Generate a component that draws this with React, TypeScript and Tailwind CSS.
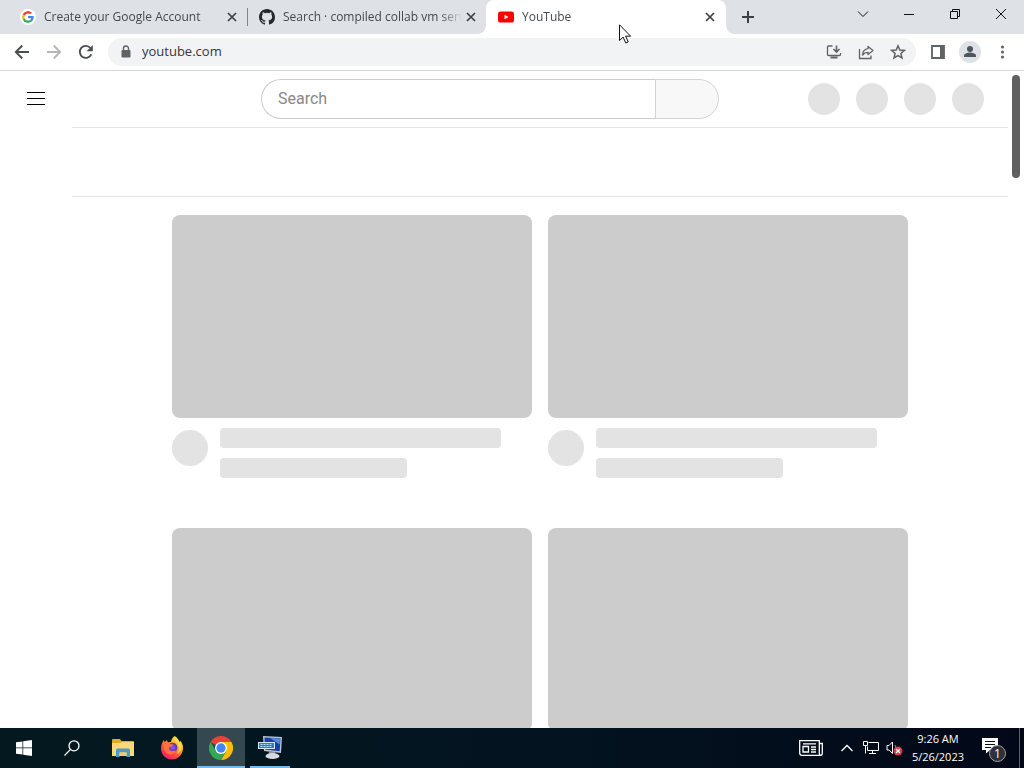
import type { ReactNode } from "react";

const uiFont = "font-['Open_Sans','Noto_Sans',sans-serif]";

function GoogleIcon() {
  return (
    <svg viewBox="0 0 48 48" className="size-4 rounded-full bg-white p-0.5" aria-hidden="true">
      <path fill="#EA4335" d="M24 9.5c3.54 0 6.71 1.22 9.21 3.6l6.85-6.85C35.9 2.38 30.47 0 24 0 14.62 0 6.51 5.38 2.56 13.22l7.98 6.19C12.43 13.72 17.74 9.5 24 9.5z" />
      <path fill="#4285F4" d="M46.98 24.55c0-1.57-.15-3.09-.38-4.55H24v9.02h12.94c-.58 2.96-2.26 5.48-4.78 7.18l7.73 6c4.51-4.18 7.09-10.36 7.09-17.65z" />
      <path fill="#FBBC05" d="M10.53 28.59c-.48-1.45-.76-2.99-.76-4.59s.27-3.14.76-4.59l-7.98-6.19C.92 16.46 0 20.12 0 24c0 3.88.92 7.54 2.56 10.78l7.97-6.19z" />
      <path fill="#34A853" d="M24 48c6.48 0 11.93-2.13 15.89-5.81l-7.73-6c-2.15 1.45-4.92 2.3-8.16 2.3-6.26 0-11.57-4.22-13.47-9.91l-7.98 6.19C6.51 42.62 14.62 48 24 48z" />
    </svg>
  );
}

function GithubIcon() {
  return (
    <svg viewBox="0 0 16 16" className="size-4" fill="#24292f" aria-hidden="true">
      <path d="M8 0C3.58 0 0 3.58 0 8c0 3.54 2.29 6.53 5.47 7.59.4.07.55-.17.55-.38 0-.19-.01-.82-.01-1.49-2.01.37-2.53-.49-2.69-.94-.09-.23-.48-.94-.82-1.13-.28-.15-.68-.52-.01-.53.63-.01 1.08.58 1.23.82.72 1.21 1.87.87 2.33.66.07-.52.28-.87.51-1.07-1.78-.2-3.64-.89-3.64-3.95 0-.87.31-1.59.82-2.15-.08-.2-.36-1.02.08-2.12 0 0 .67-.21 2.2.82a7.6 7.6 0 0 1 4 0c1.53-1.04 2.2-.82 2.2-.82.44 1.1.16 1.92.08 2.12.51.56.82 1.27.82 2.15 0 3.07-1.87 3.75-3.65 3.95.29.25.54.73.54 1.48 0 1.07-.01 1.93-.01 2.2 0 .21.15.46.55.38A8 8 0 0 0 16 8c0-4.42-3.58-8-8-8z" />
    </svg>
  );
}

function YoutubeIcon() {
  return (
    <svg viewBox="0 0 16 16" className="size-4" aria-hidden="true">
      <rect y="2.5" width="16" height="11" rx="2.6" fill="#f00" />
      <path d="M6.5 5.8v4.4L10.3 8z" fill="#fff" />
    </svg>
  );
}

function CloseIcon() {
  return (
    <svg viewBox="0 0 10 10" className="size-[10px]" stroke="#3c4043" strokeWidth="1.7" aria-hidden="true">
      <path d="M1 1l8 8M9 1L1 9" />
    </svg>
  );
}

type TabProps = { title: string; icon: ReactNode; active?: boolean; divider?: boolean };

function Tab({ title, icon, active, divider }: TabProps) {
  return (
    <div
      className={
        active
          ? "relative flex w-60 min-w-0 items-center rounded-t-lg bg-white pr-[11px] pl-3"
          : "relative flex w-[239px] min-w-0 items-center pr-[10px] pl-3"
      }
    >
      {active && (
        <>
          <span className="absolute bottom-0 -left-2 size-2 bg-[radial-gradient(circle_at_0_0,transparent_7.5px,white_8px)]" />
          <span className="absolute -right-2 bottom-0 size-2 bg-[radial-gradient(circle_at_100%_0,transparent_7.5px,white_8px)]" />
        </>
      )}
      <button role="tab" aria-selected={!!active} className="flex h-full min-w-0 flex-1 items-center gap-2 text-left">
        <span className="shrink-0">{icon}</span>
        <span className="min-w-0 flex-1 overflow-hidden text-xs whitespace-nowrap text-[#45494d] [mask-image:linear-gradient(to_right,black_88%,transparent)]">
          {title}
        </span>
      </button>
      <button aria-label={`Close ${title}`} className="ml-1 shrink-0">
        <CloseIcon />
      </button>
      {divider && <span className="absolute top-2 -right-px h-[18px] w-px bg-[#80868b]" />}
    </div>
  );
}

function WindowButton({ label, children }: { label: string; children: ReactNode }) {
  return (
    <button aria-label={label} className="flex h-7 w-[46px] items-center justify-center">
      <svg viewBox="0 0 12 12" className="size-3" fill="none" stroke="#111" strokeWidth="1" aria-hidden="true">
        {children}
      </svg>
    </button>
  );
}

function TabStrip() {
  return (
    <div className="flex h-[34px] shrink-0 bg-[#dee1e6]">
      <div role="tablist" className="flex min-w-0 pl-2">
        <Tab title="Create your Google Account" icon={<GoogleIcon />} divider />
        <Tab title="Search · compiled collab vm serv" icon={<GithubIcon />} />
        <Tab title="YouTube" icon={<YoutubeIcon />} active />
      </div>
      <button aria-label="New tab" className="flex w-11 items-center justify-center">
        <svg viewBox="0 0 12 12" className="size-3" stroke="#3c4043" strokeWidth="2" aria-hidden="true">
          <path d="M6 0v12M0 6h12" />
        </svg>
      </button>
      <div className="ml-auto flex">
        <WindowButton label="Search tabs">
          <path d="M1 3.5l5 5 5-5" />
        </WindowButton>
        <WindowButton label="Minimize">
          <path d="M1 6.5h10" />
        </WindowButton>
        <WindowButton label="Restore">
          <path d="M1.5 3.5h7v7h-7zM3.5 3.500v-2h7v7h-2" />
        </WindowButton>
        <WindowButton label="Close">
          <path d="M1 1l10 10M11 1L1 11" />
        </WindowButton>
      </div>
    </div>
  );
}

function ToolButton({ label, children }: { label: string; children: ReactNode }) {
  return (
    <button aria-label={label} className="flex h-7 w-8 shrink-0 items-center justify-center">
      <svg viewBox="0 0 16 16" className="size-4" fill="none" stroke="#5f6368" strokeWidth="1.3" aria-hidden="true">
        {children}
      </svg>
    </button>
  );
}

function Toolbar() {
  return (
    <div className="flex h-[37px] shrink-0 items-center border-b border-[#d4d6d9] bg-white px-[6px]">
      <ToolButton label="Back">
        <path d="M15 8H2M8.300 1.500L1.800 8l6.500 6.500" stroke="#4a4d51" strokeWidth="1.900" />
      </ToolButton>
      <ToolButton label="Forward">
        <path d="M1 8h13M7.700 1.500L14.200 8l-6.500 6.500" stroke="#b4b6b9" strokeWidth="1.900" />
      </ToolButton>
      <ToolButton label="Reload">
        <path d="M13.300 10.300A6 6 0 1 1 12.400 4" stroke="#4a4d51" strokeWidth="1.900" />
        <path d="M14.800 1v6.200H8.600z" fill="#4a4d51" stroke="none" />
      </ToolButton>
      <div className="ml-[6px] flex h-7 min-w-0 flex-1 items-center rounded-full bg-[#f1f3f4] pr-[2px] pl-[10px]">
        <svg viewBox="0 0 16 16" className="size-4" aria-hidden="true">
          <rect x="3.500" y="6" width="9" height="7.500" rx="1" fill="#5f6368" />
          <path d="M5.500 6.500V4.500a2.500 2.500 0 0 1 5 0v2" fill="none" stroke="#5f6368" strokeWidth="1.400" />
        </svg>
        <input
          aria-label="Address"
          defaultValue="youtube.com"
          className="ml-2 min-w-0 flex-1 bg-transparent text-[13px] text-[#34373b] outline-none"
        />
        <ToolButton label="Install YouTube">
          <path d="M6.500 2H2.500Q1.500 2 1.500 3v7.500q0 1 1 1h11q1 0 1-1V9" />
          <path d="M4.500 13.500h7" strokeWidth="2" />
          <path d="M10.500 1.500v6M7.500 5l3 3 3-3" strokeWidth="1.600" />
        </ToolButton>
        <ToolButton label="Share this page">
          <path d="M1.500 5v9.500h11.500v-3" />
          <path d="M10 2.500l5 4-5 4V8.300C7.500 8.300 6 9 4.500 11c.3-3.500 2.300-6 5.500-6.300z" strokeLinejoin="round" />
        </ToolButton>
        <ToolButton label="Bookmark this tab">
          <path d="M8 1.800l1.800 4.200 4.600.4-3.500 3 1.100 4.500L8 11.500l-4 2.400 1.100-4.500-3.500-3L6.200 6z" strokeWidth="1.500" />
        </ToolButton>
      </div>
      <div className="ml-[6px] flex">
        <ToolButton label="Side panel">
          <path d="M2 2h12v12H2z" strokeWidth="1.800" />
          <path d="M10 2h4v12h-4z" fill="#5f6368" stroke="none" />
        </ToolButton>
        <button aria-label="Profile" className="flex h-7 w-8 items-center justify-center">
          <svg viewBox="0 0 22 22" className="size-[22px]" aria-hidden="true">
            <circle cx="11" cy="11" r="11" fill="#dee1e6" />
            <circle cx="11" cy="8" r="3" fill="#4f565f" />
            <path d="M5 16v-1.500c0-2 4-3 6-3s6 1 6 3V16z" fill="#4f565f" />
          </svg>
        </button>
        <ToolButton label="Chrome menu">
          <g fill="#5f6368" stroke="none">
            <circle cx="8.500" cy="3" r="1.600" />
            <circle cx="8.500" cy="8" r="1.600" />
            <circle cx="8.500" cy="13" r="1.600" />
          </g>
        </ToolButton>
      </div>
    </div>
  );
}

function Masthead() {
  return (
    <header className="flex h-14 items-center">
      <div className="w-[261px] shrink-0 pl-6">
        <button aria-label="Guide" className="flex">
          <svg viewBox="0 0 24 24" className="size-6" stroke="#030303" strokeWidth="1" aria-hidden="true">
            <path d="M3 5.500h18M3 11.500h18M3 17.500h18" />
          </svg>
        </button>
      </div>
      <form className="flex h-10 min-w-0 flex-1" onSubmit={(e) => e.preventDefault()}>
        <input
          type="text"
          aria-label="Search"
          placeholder="Search"
          className="min-w-0 flex-1 rounded-l-full border border-r-0 border-[#ccc] pl-4 font-[Roboto,sans-serif] text-base text-[#111] outline-none placeholder:text-[#888]"
        />
        <button aria-label="Submit search" className="w-16 rounded-r-full border border-[#d3d3d3] bg-[#f8f8f8]" />
      </form>
      <div className="flex shrink-0 gap-4 pr-6 pl-[89px]">
        {[0, 1, 2, 3].map((i) => (
          <span key={i} className="size-8 rounded-full bg-[#e3e3e3]" />
        ))}
      </div>
    </header>
  );
}

function VideoSkeleton() {
  return (
    <div>
      <div className="h-[203px] rounded-lg bg-[#ccc]" />
      <div className="flex gap-3 pt-[10px]">
        <div className="mt-[2px] size-9 shrink-0 rounded-full bg-[#e3e3e3]" />
        <div className="flex-1">
          <div className="h-5 w-[90%] rounded-sm bg-[#e3e3e3]" />
          <div className="mt-[10px] h-5 w-[60%] rounded-sm bg-[#e3e3e3]" />
        </div>
      </div>
    </div>
  );
}

function Page() {
  return (
    <div className="flex min-h-0 flex-1 bg-white">
      <div className="min-w-0 flex-1 overflow-hidden">
        <Masthead />
        <main className="ml-[72px] border-t border-[#e5e5e5]">
          <div className="h-[69px] border-b border-[#e5e5e5]" />
          <div className="mx-auto grid max-w-[736px] grid-cols-2 gap-x-4 gap-y-[50px] pt-[18px]">
            {[0, 1, 2, 3].map((i) => (
              <VideoSkeleton key={i} />
            ))}
          </div>
        </main>
      </div>
      <div className="w-4 shrink-0 px-1 pt-1">
        <div className="h-[103px] rounded-full bg-[#606060]" />
      </div>
    </div>
  );
}

function TaskButton({ label, className = "", children }: { label: string; className?: string; children: ReactNode }) {
  return (
    <button aria-label={label} className={`flex w-12 shrink-0 items-center justify-center ${className}`}>
      {children}
    </button>
  );
}

function Taskbar() {
  return (
    <footer className="flex h-10 shrink-0 bg-gradient-to-r from-[#03191f] via-[#031420] to-[#020817] text-white">
      <TaskButton label="Start">
        <svg viewBox="0 0 16 16" className="size-4" fill="#fff" aria-hidden="true">
          <path d="M0 2.300l6.500-.9v6.200H0zM7.200 1.300L16 0v7.600H7.200zM0 8.300h6.500v6.300L0 13.700zM7.200 8.300H16V16l-8.800-1.300z" />
        </svg>
      </TaskButton>
      <TaskButton label="Search">
        <svg viewBox="0 0 16 16" className="size-4" fill="none" stroke="#fff" strokeWidth="1.300" aria-hidden="true">
          <circle cx="10" cy="5.800" r="5" />
          <path d="M6.500 9.400L.5 15.500" />
        </svg>
      </TaskButton>
      <div className="flex gap-[1px] pl-[3px]">
        <TaskButton label="File Explorer">
          <svg viewBox="0 0 22 18" className="h-[18px] w-[22px]" aria-hidden="true">
            <path d="M0 1q0-1 1-1h7l1.500 2H21q1 0 1 1v14H0z" fill="#e2a928" />
            <path d="M0 4h8.500L10 3h12v14H0z" fill="#fcd975" />
            <path d="M4 18v-7q0-1.500 1.500-1.500h11Q18 9.500 18 11v7h-3.500v-4.500h-7V18z" fill="#4c9bc9" />
            <path d="M7.500 13.500h7V17h-7z" fill="#f2cc66" />
          </svg>
        </TaskButton>
        <TaskButton label="Firefox">
          <svg viewBox="0 0 24 24" className="size-6" aria-hidden="true">
            <defs>
              <linearGradient id="flame" x1="0.850" y1="0" x2="0.200" y2="1">
                <stop offset="0" stopColor="#fff44f" />
                <stop offset=".35" stopColor="#ffb02e" />
                <stop offset=".65" stopColor="#ff4f40" />
                <stop offset="1" stopColor="#e5196d" />
              </linearGradient>
              <radialGradient id="globe">
                <stop offset="0" stopColor="#9059ff" />
                <stop offset="1" stopColor="#5b2bb5" />
              </radialGradient>
            </defs>
            <path d="M14.500 0c3 1.700 4.500 4 5 6l1-1.200c2 3 2.900 5.400 2.500 8.200C22.300 19 18 23.500 12 23.500S1 19 1 12.500C1 9 2.200 6 4 4l.7 2.200L7 4l.7 2.500c1-.5 2.300-.7 3.300-.5C11.300 3.500 12.500 1.500 14.500 0z" fill="url(#flame)" />
            <circle cx="12.500" cy="11.500" r="4.800" fill="url(#globe)" />
            <path d="M3 8c2.500-1.800 5-1.500 6.500 0l3.500.5c.5 1.500-1.500 2-3.500 2.500-.8 1.500-.3 2.700.8 3.500 2.200 1 4 .5 5.500-.2-.8 3-3.500 4.500-6.300 4C5.500 17.500 3.500 13.500 3 8z" fill="#ff7139" />
            <path d="M14.500 3c1.500 3.500 5 5.500 4.500 10-.2 2-1.200 3.500-2.500 4.500 5-1 6.500-7.500 3-11.500C18 4.500 16 2.500 14.500 3z" fill="#ffe04b" />
          </svg>
        </TaskButton>
        <TaskButton label="Google Chrome" className="border-b-2 border-[#76b9ed] bg-[#344850] pt-[2px]">
          <svg viewBox="0 0 48 48" className="size-6" aria-hidden="true">
            <path d="M24 24L3.200 12A24 24 0 0 1 44.800 12z" fill="#ea4335" />
            <path d="M24 12h20.800A24 24 0 0 1 24 48l10.400-18z" fill="#fbbc05" />
            <path d="M13.600 30L3.200 12A24 24 0 0 0 24 48l10.400-18z" fill="#34a853" />
            <circle cx="24" cy="24" r="12" fill="#fff" />
            <circle cx="24" cy="24" r="9.300" fill="#4285f4" />
          </svg>
        </TaskButton>
        <TaskButton label="Remote desktop" className="relative">
          <svg viewBox="0 0 24 24" className="size-6" aria-hidden="true">
            <path d="M5 0l19 1-1 16-17-2z" fill="#b9c6d9" />
            <path d="M6.500 1.500l16 .8-.8 13-14.700-1.800z" fill="#173fa5" />
            <path d="M12 2l10 .5-.4 6z" fill="#5689dd" />
            <path d="M0 6h17v7H0z" fill="#d7e8f5" />
            <path d="M1 7h15v5H1z" fill="#2980c7" />
            <path d="M2.500 8.500h12M2.500 10.500h12" stroke="#b4dcf5" strokeDasharray="2 1" />
            <path d="M11 15l6 .7.500 4-7-.5z" fill="#8d97a6" />
            <ellipse cx="14.500" cy="20" rx="7" ry="3" fill="#d8d9da" />
          </svg>
          <span className="absolute inset-x-1 bottom-0 h-[2px] bg-[#76b9ed]" />
        </TaskButton>
      </div>
      <div className="ml-auto flex items-center">
        <button aria-label="News and interests" className="mr-[18px]">
          <svg viewBox="0 0 24 16" className="h-4 w-6" fill="none" stroke="#fff" strokeWidth="1.300" aria-hidden="true">
            <path d="M3 15.300q-2.300 0-2.300-2.300V.7h19.600V13q0 2.300 1.500 2.300 1.500 0 1.500-2.300V3.500h-3M3 15.300h18.800" />
            <path d="M4 6.500h5.500v5.500H4zM4 3.800h13M12 7h5M12 9.500h5M12 12h5" />
          </svg>
        </button>
        <button aria-label="Show hidden icons" className="mr-[10px]">
          <svg viewBox="0 0 12 8" className="h-2 w-3" fill="none" stroke="#fff" strokeWidth="1.300" aria-hidden="true">
            <path d="M.5 7L6 1.500 11.500 7" />
          </svg>
        </button>
        <button aria-label="Network" className="mr-[7px]">
          <svg viewBox="0 0 16 14" className="h-[14px] w-4" fill="none" stroke="#fff" strokeWidth="1" aria-hidden="true">
            <path d="M5.500 1.500h10v8h-11v-4M.5.500h4v4h-4zM2.500 4.500v8M9.500 9.500v3M6 12.500h7" />
          </svg>
        </button>
        <button aria-label="Volume muted" className="mr-[9px]">
          <svg viewBox="0 0 17 16" className="h-4 w-[17px]" fill="none" aria-hidden="true">
            <path d="M1 5.500h2L6.500 2v11.500L3 10H1z" stroke="#fff" />
            <path d="M9 5q1.500 2 0 4" stroke="#889" />
            <circle cx="12" cy="11" r="4.500" fill="#d13b43" />
            <path d="M10 9l4 4M14 9l-4 4" stroke="#fff" strokeWidth="1.200" />
          </svg>
        </button>
        <time className="text-center text-[11px] leading-[18px]">
          9:26 AM
          <br />
          5/26/2023
        </time>
        <button aria-label="1 new notification" className="relative mt-1 ml-[17px] h-6 w-6">
          <svg viewBox="0 0 24 24" className="size-6" aria-hidden="true">
            <path d="M1 0h16v12H9l-4 3.500V12H1z" fill="#fff" />
            <path d="M4 3.500h10M4 6.500h10M4 9.500h6" stroke="#06101c" />
          </svg>
          <span className="absolute top-[7px] left-2 flex size-[17px] items-center justify-center rounded-full border border-[#9da2a8] bg-[#2c3238] text-xs leading-none">
            1
          </span>
        </button>
        <button aria-label="Show desktop" className="ml-[14px] h-10 w-[5px] border-l border-[#586068]" />
      </div>
    </footer>
  );
}

export default function App() {
  return (
    <div className={`relative flex h-screen flex-col overflow-hidden ${uiFont}`}>
      <TabStrip />
      <Toolbar />
      <Page />
      <Taskbar />
      <svg viewBox="0 0 13 20" className="pointer-events-none absolute top-6 left-[619px] h-5 w-[13px]" aria-hidden="true">
        <path d="M.5.800v15.700l3.600-3.400 2.700 5.900 2.400-1.100-2.600-5.700h5z" fill="#fff" stroke="#111" />
      </svg>
    </div>
  );
}
